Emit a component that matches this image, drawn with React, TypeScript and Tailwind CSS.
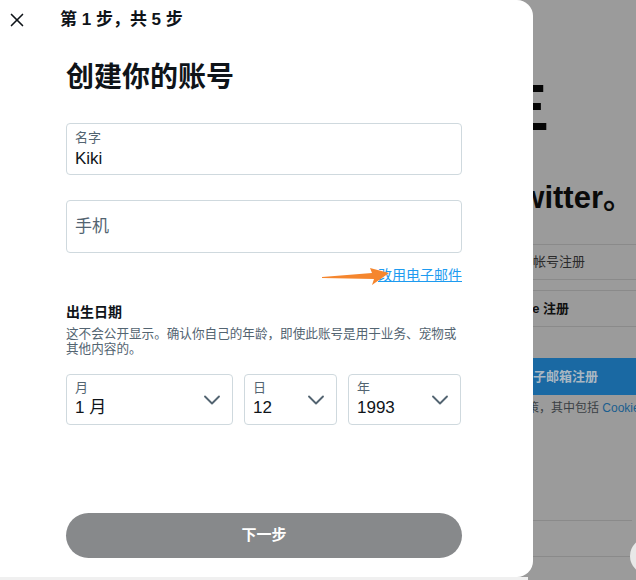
import { X, ChevronDown } from 'lucide-react';

function DateSelect({ label, value, width }: { label: string; value: string; width: string }) {
  return (
    <div className={`${width} h-[51px] flex items-center justify-between rounded-[4px] border border-[#cfd9de] pl-[8px] pr-[6px]`}>
      <div className="flex flex-col">
        <span className="text-[13px] leading-[16px] text-[#536471]">{label}</span>
        <span className="text-[17px] leading-[24px] text-[#0f1419]">{value}</span>
      </div>
      <ChevronDown size={28} strokeWidth={1.6} className="text-[#536471]" />
    </div>
  );
}

export default function App() {
  return (
    <div className="relative w-[636px] h-[580px] overflow-hidden bg-[#9b9b9b] font-['Liberation_Sans','Noto_Sans_CJK_SC',sans-serif]">
      {/* landing page behind the overlay, only its right edge shows */}
      <div className="absolute top-0 bottom-0 left-[520px] right-0 overflow-hidden">
        <div className="ml-[-159px] w-[300px] flex flex-col">
          <div className="mt-[76px] flex justify-end pr-[112px]">
            <span className="whitespace-nowrap text-[60px] leading-[60px] font-bold text-[#050505]">此刻正在发生</span>
          </div>
          <div className="mt-[44px] flex justify-end pr-[27px]">
            <span className="whitespace-nowrap text-[31px] leading-[36px] font-bold text-[#0a0a0a]">今天就加入 Twitter。</span>
          </div>
          <div className="mt-[28px] h-[36px] flex items-center justify-end pr-[75px] rounded-full border border-[#8a8a8a] whitespace-nowrap text-[13px] text-[#2b2b2b]">
            使用 Google 帐号注册
          </div>
          <div className="mt-[10px] h-[37px] flex items-center justify-end pr-[91px] rounded-full border border-[#8a8a8a] whitespace-nowrap text-[13px] font-bold text-[#111]">
            使用 Apple 注册
          </div>
          <div className="mt-[31px] h-[37px] flex items-center justify-end pr-[63px] rounded-full bg-[#1a69a3] whitespace-nowrap text-[13px] font-bold text-[#a9b7c2]">
            使用手机号或电子邮箱注册
          </div>
          <div className="mt-[5px] pl-[130px] whitespace-nowrap text-[12px] leading-[16px] text-[#3a3f44]">
            隐私政策，其中包括 <span className="text-[#1a5e8f]">Cookie</span> 使用政策。
          </div>
          <div className="mt-[104px] mr-[29px] h-[37px] border-y border-[#8a8a8a]" />
        </div>
      </div>
      <div className="absolute left-[630px] top-[538px] w-[36px] h-[36px] rounded-full bg-[#e8e8e8]" />

      {/* modal */}
      <div className="absolute left-0 top-0 w-[533px] h-[577px] rounded-r-[16px] bg-white flex flex-col">
        <div className="h-[40px] flex items-center">
          <div className="w-[60px] pl-[6px] flex items-center">
            <X size={22} strokeWidth={1.8} className="text-[#0f1419]" />
          </div>
          <span className="text-[17px] font-bold text-[#0f1419]">第 1 步，共 5 步</span>
        </div>

        <div className="ml-[66px] w-[396px] flex flex-col">
          <h1 className="mt-[21px] text-[28px] leading-[34px] font-bold text-[#0f1419]">创建你的账号</h1>

          <div className="mt-[28px] h-[52px] rounded-[4px] border border-[#cfd9de] px-[8px] pt-[6px] flex flex-col">
            <span className="text-[13px] leading-[16px] text-[#536471]">名字</span>
            <span className="mt-[1px] text-[17px] leading-[24px] text-[#0f1419]">Kiki</span>
          </div>

          <div className="mt-[25px] h-[53px] rounded-[4px] border border-[#cfd9de] px-[8px] flex items-center text-[17px] text-[#536471]">
            手机
          </div>

          <div className="mt-[12px] flex justify-end">
            <span className="text-[14px] leading-[20px] text-[#1d9bf0] underline">改用电子邮件</span>
          </div>

          <div className="mt-[17px] text-[14px] leading-[20px] font-bold text-[#0f1419]">出生日期</div>
          <p className="mt-[5px] text-[12.6px] leading-[15px] text-[#536471]">
            这不会公开显示。确认你自己的年龄，即使此账号是用于业务、宠物或其他内容的。
          </p>

          <div className="mt-[17px] flex gap-[11px]">
            <DateSelect label="月" value="1 月" width="w-[167px]" />
            <DateSelect label="日" value="12" width="w-[93px]" />
            <DateSelect label="年" value="1993" width="w-[113px]" />
          </div>

          <button className="mt-[88px] h-[45px] rounded-full bg-[#87898b] text-[15px] font-bold text-white">
            下一步
          </button>
        </div>
      </div>
      <div className="absolute left-0 top-[577px] w-[528px] h-[3px] bg-[#f0f0f0]" />

      {/* annotation arrow */}
      <svg className="absolute left-[318px] top-[264px]" width="74" height="24" viewBox="0 0 74 24">
        <polygon points="4,13 54,9 52,4 71,9 54,21 56,15 4,14" fill="#f5862e" />
      </svg>
    </div>
  );
}
